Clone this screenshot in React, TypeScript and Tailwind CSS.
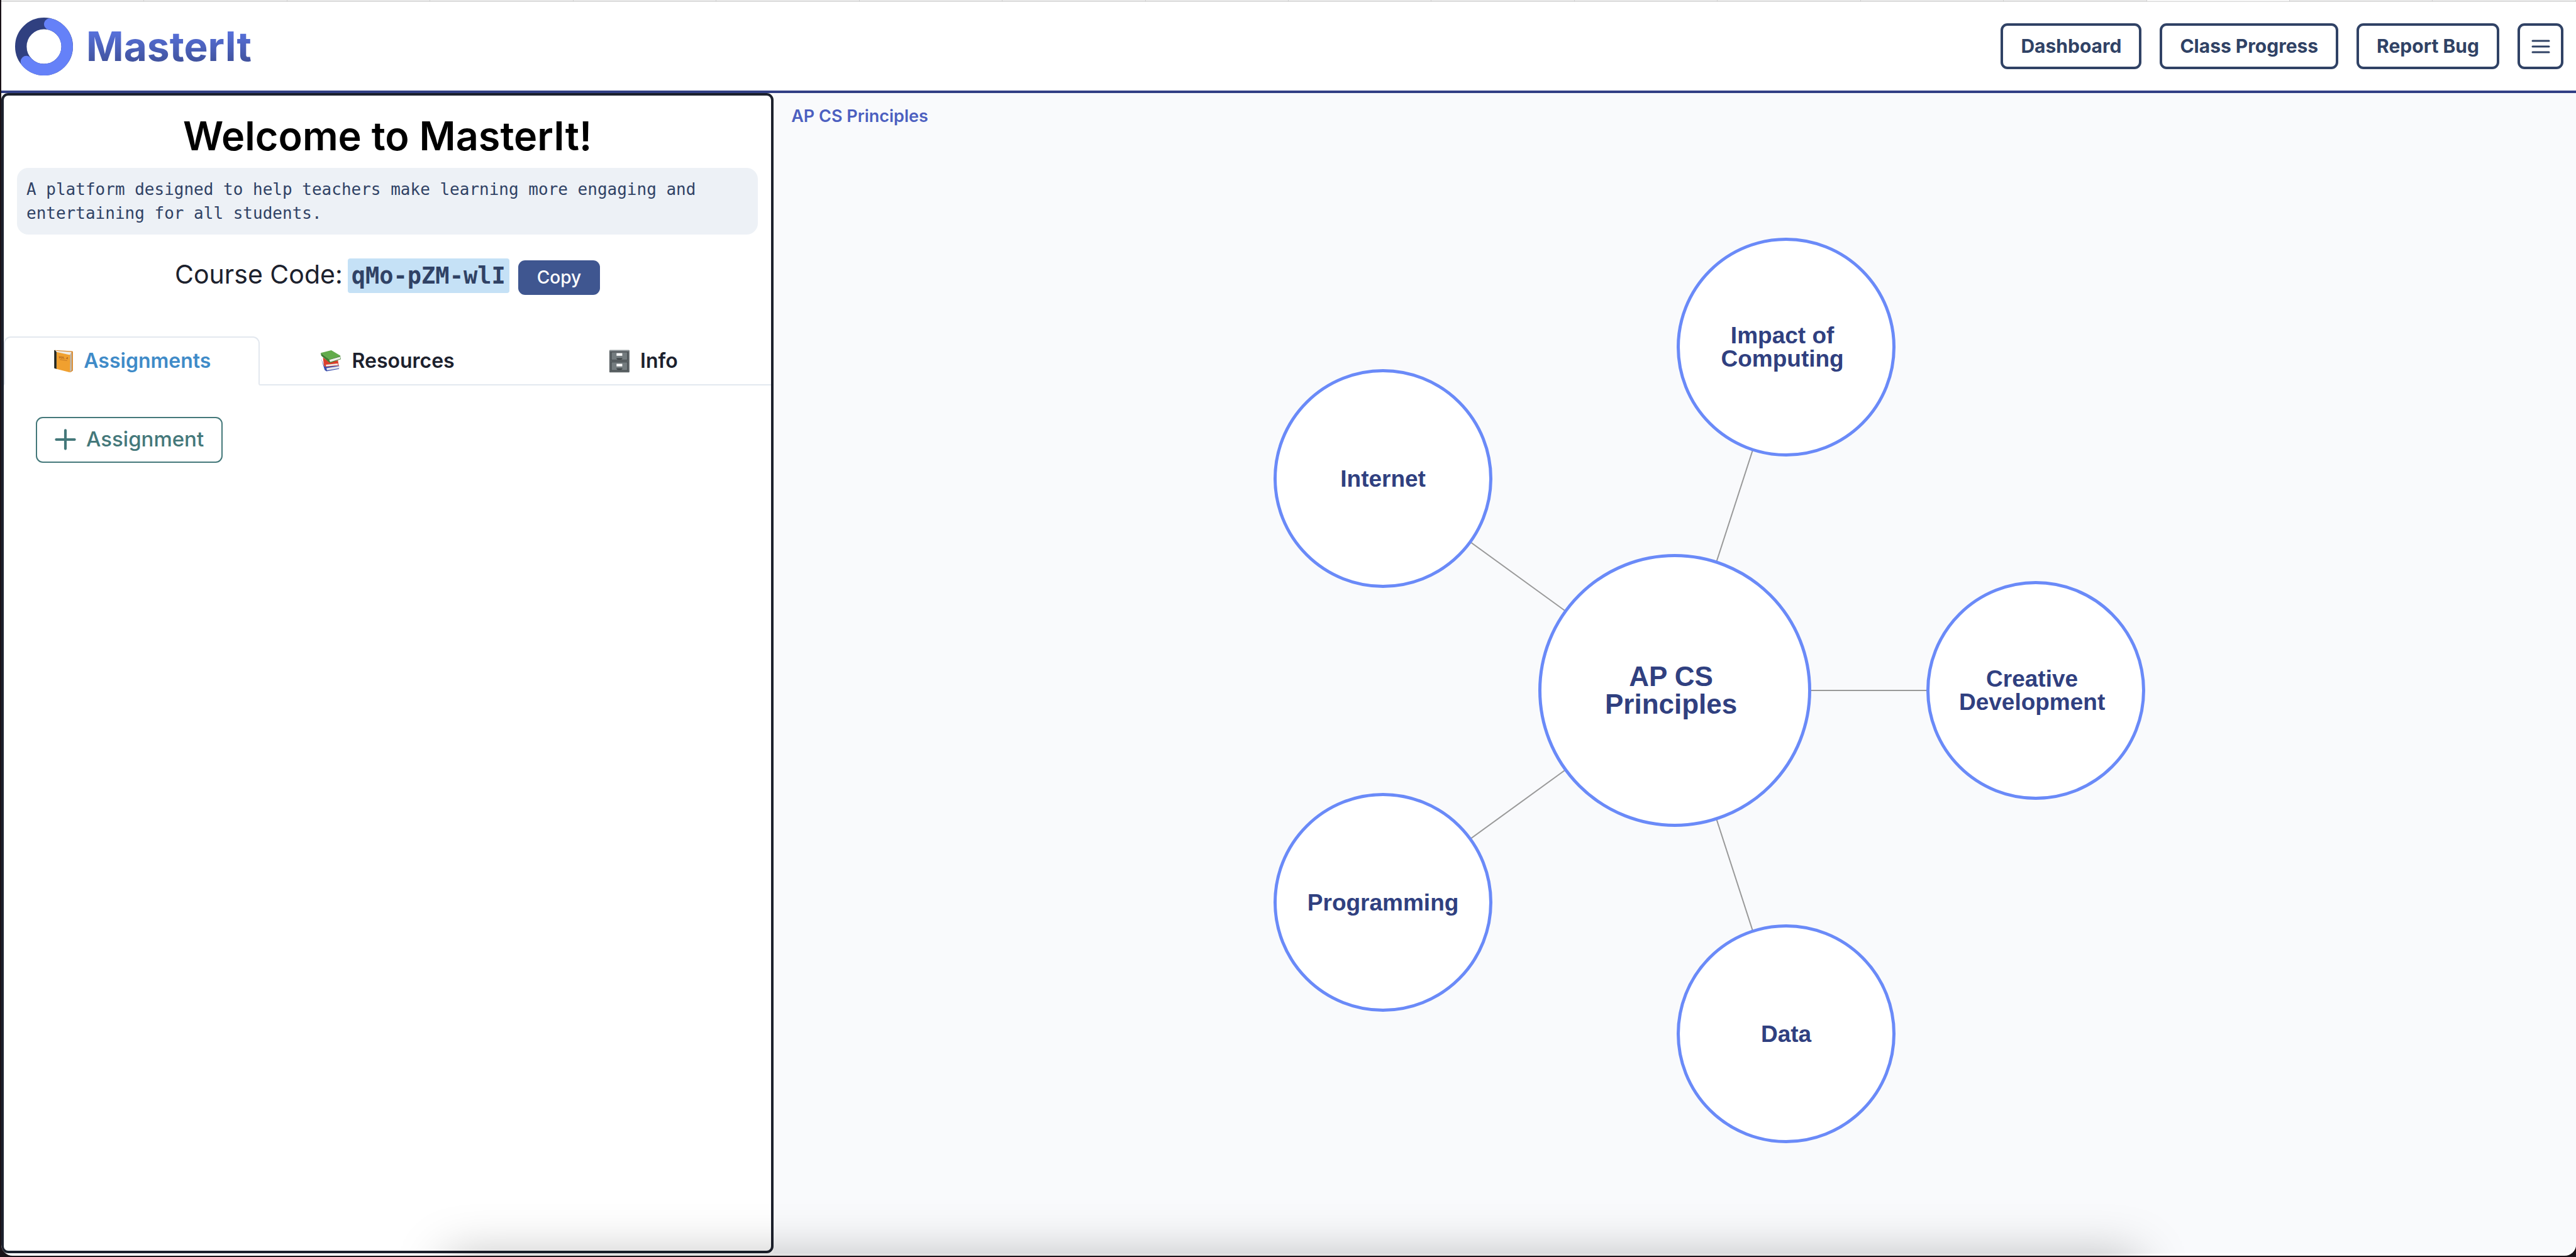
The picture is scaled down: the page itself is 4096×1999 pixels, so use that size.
import { Plus } from "lucide-react";

const tabs = Array.from({ length: 18 }, (_, i) => i);

const topics = [
  { lines: ["Creative", "Development"], angle: 0 },
  { lines: ["Data"], angle: 72 },
  { lines: ["Programming"], angle: 144 },
  { lines: ["Internet"], angle: 216 },
  { lines: ["Impact of", "Computing"], angle: 288 },
];
const ORBIT = 574;

function place(angle: number) {
  const r = (angle * Math.PI) / 180;
  return { x: Math.round(ORBIT * Math.cos(r)), y: Math.round(ORBIT * Math.sin(r)) };
}

function Logo() {
  return (
    <svg className="size-[92px]" viewBox="0 0 100 100" fill="none" aria-hidden="true">
      <circle cx="50" cy="50" r="40" stroke="#304080" strokeWidth="20" />
      <path d="M60 11.3A40 40 0 1 1 19.5 76" stroke="#6581f8" strokeWidth="20" strokeLinecap="round" />
    </svg>
  );
}

function LedgerIcon() {
  return (
    <svg className="size-[42px]" viewBox="5 8 46 46" aria-hidden="true">
      <path d="M9 12L40 14Q41 14 41 15V48L36.500 51L35 20Z" fill="#d88524" />
      <path d="M12 13.500L39 15.500L36 20.500L12.500 16Z" fill="#efece6" />
      <path d="M36 20.500L39 16V47.500L36 50Z" fill="#bfbab2" />
      <path d="M12.500 15.500L36 20.500V51L12.500 45Z" fill="#f0a02f" />
      <path d="M8.500 12.500L10 12L12.500 15.500V45L9 44Q8.500 43.500 8.500 43Z" fill="#23261f" />
      <text x="16" y="26" transform="rotate(8 16 26)" fontSize="5" fontWeight="700" fill="#a3561a">
        VOL. 4
      </text>
      <path d="M18 28.500L31 30.500" stroke="#b8691f" strokeWidth="0.800" />
    </svg>
  );
}

function BooksIcon() {
  return (
    <svg className="size-[42px]" viewBox="10 8 46 46" aria-hidden="true">
      <path d="M11.500 26L17 40L43 39V45L21 49L18 47Z" fill="#3a4fae" />
      <path d="M21 43.500L43 40V44L22 47.500Z" fill="#e6e6ea" />
      <path d="M15 25L26 33L41 30L42.500 39L20 41.500L16.500 39Z" fill="#da3f2c" />
      <path d="M20 37.500L41 35.500V38.500L20.500 40.500Z" fill="#efebe7" />
      <path d="M11 17L26 28L45 22L46 28L27 34.500L25 33L12 22Z" fill="#3f7f33" />
      <path d="M26 29L45 23.500V27.500L27.500 33Z" fill="#eeeeea" />
      <path d="M11 17L29.500 12.500L45.500 22L26 28.500Z" fill="#62ab4b" />
    </svg>
  );
}

function CabinetIcon() {
  return (
    <svg className="size-[42px]" viewBox="11 8 46 46" aria-hidden="true">
      <rect x="12" y="12" width="35" height="39" rx="1" fill="#5c6366" />
      <rect x="12" y="12" width="35" height="2" rx="1" fill="#8d9497" />
      <rect x="15.500" y="15.500" width="28" height="14" fill="#747c7f" stroke="#454b4e" />
      <rect x="15.500" y="33" width="28" height="14.500" fill="#747c7f" stroke="#454b4e" />
      <rect x="24.500" y="17.500" width="10" height="4.500" fill="#fff" />
      <rect x="24.500" y="36" width="10" height="4.500" fill="#fff" />
      <path d="M24 26H35Q34 28.500 32 28.500H27Q25 28.500 24 26Z" fill="#3c4245" />
      <path d="M24 44H35Q34 46.500 32 46.500H27Q25 46.500 24 44Z" fill="#3c4245" />
    </svg>
  );
}

const navButton =
  "flex h-[73px] items-center justify-center rounded-[11px] border-4 border-[#304265] text-[30px] font-bold text-[#304265]";

export default function App() {
  return (
    <div className="flex min-h-screen flex-col bg-[#1a1218] pb-[2px] pl-[2px] font-['Inter','Liberation_Sans',sans-serif]">
      <div className="relative flex flex-1 flex-col overflow-hidden rounded-b-[18px] bg-white pb-1">
        <div className="flex h-[3px] border-b border-[#d4d4d4] bg-[#e7e7e7]" aria-hidden="true">
          {tabs.map((i) => (
            <span key={i} className={i === 15 ? "flex-1 border-r border-[#d0d0d0] bg-[#f6f6f6]" : "flex-1 border-r border-[#d0d0d0]"} />
          ))}
        </div>

        <header className="flex h-[145px] items-center justify-between border-b-4 border-[#323f85] pr-5 pl-[22px]">
          <a href="#home" className="flex items-center gap-[21px]">
            <Logo />
            <span className="bg-linear-to-b from-[#5f7bf0] to-[#3a4a8c] bg-clip-text text-[64px] leading-[78px] font-bold text-transparent">
              MasterIt
            </span>
          </a>
          <nav className="flex gap-[29px]">
            <button className={`${navButton} px-7`}>Dashboard</button>
            <button className={`${navButton} px-7`}>Class Progress</button>
            <button className={`${navButton} px-7`}>Report Bug</button>
            <button className={`${navButton} w-[73px]`} aria-label="Menu">
              <svg className="h-[22px] w-[30px]" viewBox="0 0 30 22" stroke="currentColor" strokeWidth="3" strokeLinecap="round" aria-hidden="true">
                <path d="M2 2H28M2 11H28M2 20H28" />
              </svg>
            </button>
          </nav>
        </header>

        <div className="flex flex-1">
          <aside className="flex w-[30%] flex-col rounded-[11px] border-4 border-[#1c212d] bg-white">
            <h1 className="mt-6 text-center text-[63px] leading-[80px] font-semibold text-black">Welcome to MasterIt!</h1>
            <p className="mx-[21px] mt-[11px] rounded-[18px] bg-[#edf1f6] px-[15px] py-[15px] font-['DejaVu_Sans_Mono',monospace] text-[26px] leading-[38px] text-[#304265]">
              A platform designed to help teachers make learning more engaging and entertaining for all students.
            </p>
            <div className="mt-9 flex items-baseline justify-center text-[#1c212d]">
              <span className="text-[41px] leading-[55px]">Course Code:</span>
              <code className="ml-2 rounded-[4px] bg-[#c5e1f6] px-[6px] font-['DejaVu_Sans_Mono',monospace] text-[37px] leading-[55px] font-bold text-[#304265]">
                qMo-pZM-wlI
              </code>
              <button className="ml-[14px] h-[55px] rounded-[11px] bg-[#3f5690] px-[30px] text-[28px] font-medium text-white">Copy</button>
            </div>

            <div role="tablist" className="mt-[66px] grid grid-cols-3 text-[32px] font-semibold text-[#1c212d]">
              <button role="tab" aria-selected="true" className="flex h-[78px] items-center justify-center gap-2 rounded-t-[11px] border-2 border-[#e3e8ef] border-b-white text-[#3f8bc8]">
                <LedgerIcon />
                Assignments
              </button>
              <button role="tab" aria-selected="false" className="flex h-[78px] items-center justify-center gap-2 border-y-2 border-t-transparent border-b-[#e3e8ef]">
                <BooksIcon />
                Resources
              </button>
              <button role="tab" aria-selected="false" className="flex h-[78px] items-center justify-center gap-2 border-y-2 border-t-transparent border-b-[#e3e8ef]">
                <CabinetIcon />
                Info
              </button>
            </div>

            <div role="tabpanel" className="px-[51px] pt-[50px]">
              <button className="flex h-[73px] items-center gap-2 rounded-[11px] border-2 border-[#44787a] pr-7 pl-5 text-[33px] font-medium text-[#44787a]">
                <Plus className="size-[50px]" strokeWidth={2} aria-hidden="true" />
                Assignment
              </button>
            </div>
          </aside>

          <main className="flex flex-1 flex-col bg-[#f9fafc]">
            <a href="#course" className="self-start px-7 pt-[19px] text-[27px] leading-9 font-semibold text-[#4c5fc0]">
              AP CS Principles
            </a>
            <div className="relative flex-1 font-['Liberation_Sans',Arial,sans-serif] font-bold text-[#304080]">
              <div className="absolute top-1/2 left-1/2 size-0">
                <svg className="absolute size-px overflow-visible" stroke="#999999" strokeWidth="2" aria-hidden="true">
                  {topics.map((t) => {
                    const p = place(t.angle);
                    return <line key={t.angle} x1="0" y1="0" x2={p.x} y2={p.y} />;
                  })}
                </svg>
                <button className="absolute flex size-[434px] -translate-1/2 flex-col items-center justify-center rounded-full border-5 border-[#6a8af8] bg-white pr-3 text-[44px] leading-[44px]">
                  <span>AP CS</span>
                  <span>Principles</span>
                </button>
                {topics.map((t) => {
                  const p = place(t.angle);
                  return (
                    <button
                      key={t.angle}
                      className={
                        t.lines.length > 1
                          ? "absolute flex size-[348px] -translate-1/2 flex-col items-center justify-center rounded-full border-5 border-[#6a8af8] bg-white pr-3 text-[37px] leading-[37px]"
                          : "absolute flex size-[348px] -translate-1/2 flex-col items-center justify-center rounded-full border-5 border-[#6a8af8] bg-white text-[37px] leading-[37px]"
                      }
                      style={{ left: p.x, top: p.y }}
                    >
                      {t.lines.map((l) => (
                        <span key={l}>{l}</span>
                      ))}
                    </button>
                  );
                })}
              </div>
            </div>
          </main>
        </div>

        <div className="pointer-events-none absolute top-full right-[17%] left-[17.3%] h-40 shadow-[0_0_80px_rgba(0,0,0,0.26)]" />
      </div>
    </div>
  );
}
